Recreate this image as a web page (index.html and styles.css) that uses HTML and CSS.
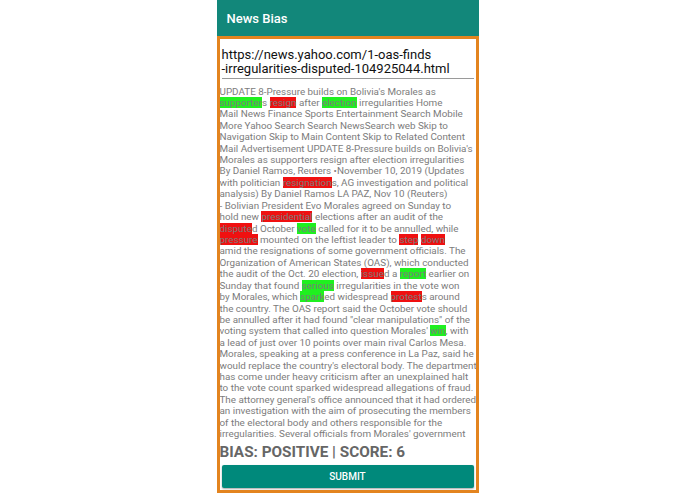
FILE: index.html
```html
<!DOCTYPE html>
<html>
<head>
<meta charset="utf-8">
<link rel="stylesheet" href="styles.css">
</head>
<body>
<div class="app">
  <header class="bar">News Bias</header>
  <main class="panel">
    <div class="url">
      <div>https://news.yahoo.com/1-oas-finds</div>
      <div>-irregularities-disputed-104925044.html</div>
    </div>
    <div class="article">
      <div class="ln">UPDATE 8-Pressure builds on Bolivia's Morales as</div>
      <div class="ln"><span class="g">supporter</span>s <span class="r">resign</span> after <span class="g">election</span> irregularities Home</div>
      <div class="ln">Mail News Finance Sports Entertainment Search Mobile</div>
      <div class="ln">More Yahoo Search Search NewsSearch web Skip to</div>
      <div class="ln">Navigation Skip to Main Content Skip to Related Content</div>
      <div class="ln">Mail Advertisement UPDATE 8-Pressure builds on Bolivia's</div>
      <div class="ln">Morales as supporters resign after election irregularities</div>
      <div class="ln">By Daniel Ramos, Reuters •November 10, 2019 (Updates</div>
      <div class="ln">with politician <span class="r">resignation</span>s, AG investigation and political</div>
      <div class="ln">analysis) By Daniel Ramos LA PAZ, Nov 10 (Reuters)</div>
      <div class="ln">- Bolivian President Evo Morales agreed on Sunday to</div>
      <div class="ln">hold new <span class="r">presidential</span> elections after an audit of the</div>
      <div class="ln"><span class="r">dispute</span>d October <span class="g">vote</span> called for it to be annulled, while</div>
      <div class="ln"><span class="r">pressure</span> mounted on the leftist leader to <span class="r">step</span> <span class="r">down</span></div>
      <div class="ln">amid the resignations of some government officials. The</div>
      <div class="ln">Organization of American States (OAS), which conducted</div>
      <div class="ln">the audit of the Oct. 20 election, <span class="r">issue</span>d a <span class="g">report</span> earlier on</div>
      <div class="ln">Sunday that found <span class="g">serious</span> irregularities in the vote won</div>
      <div class="ln">by Morales, which <span class="g">spark</span>ed widespread <span class="r">protest</span>s around</div>
      <div class="ln">the country. The OAS report said the October vote should</div>
      <div class="ln">be annulled after it had found "clear manipulations" of the</div>
      <div class="ln">voting system that called into question Morales' <span class="g">win</span>, with</div>
      <div class="ln">a lead of just over 10 points over main rival Carlos Mesa.</div>
      <div class="ln">Morales, speaking at a press conference in La Paz, said he</div>
      <div class="ln">would replace the country's electoral body. The department</div>
      <div class="ln">has come under heavy criticism after an unexplained halt</div>
      <div class="ln">to the vote count sparked widespread allegations of fraud.</div>
      <div class="ln">The attorney general's office announced that it had ordered</div>
      <div class="ln">an investigation with the aim of prosecuting the members</div>
      <div class="ln">of the electoral body and others responsible for the</div>
      <div class="ln">irregularities. Several officials from Morales' government</div>
    </div>
    <div class="bias">BIAS: POSITIVE | SCORE: 6</div>
    <button class="submit">SUBMIT</button>
  </main>
</div>
</body>
</html>
```

FILE: styles.css
```css
html, body {
  margin: 0;
  padding: 0;
  background: #ffffff;
}
body {
  font-family: Roboto, "Liberation Sans", sans-serif;
}
.app {
  width: 262px;
  height: 494px;
  margin: 0 auto;
  display: flex;
  flex-direction: column;
}
.bar {
  height: 36px;
  flex: none;
  background: #12877a;
  color: #ffffff;
  font-size: 13px;
  font-weight: 500;
  display: flex;
  align-items: center;
  padding-left: 10px;
  box-sizing: border-box;
}
.panel {
  height: 457px;
  flex: none;
  box-sizing: border-box;
  border: 3px solid #e3841f;
  display: flex;
  flex-direction: column;
  background: #ffffff;
  overflow: hidden;
}
.url {
  margin: 0 2px;
  padding: 8.5px 0 2.5px;
  font-size: 13px;
  line-height: 14px;
  color: #111111;
  border-bottom: 1px solid #9a9a9a;
  white-space: nowrap;
}
.article {
  margin-top: 6.5px;
  font-size: 9.85px;
  line-height: 11.43px;
  color: #7c7c7c;
}
.ln {
  white-space: pre;
  height: 11.43px;
}
.g {
  background: #1ff01f;
}
.r {
  background: #f01010;
}
.bias {
  margin-top: 2px;
  font-size: 15.3px;
  font-weight: 700;
  color: #666666;
  line-height: 20px;
}
.submit {
  margin: 3px 2px 0;
  height: 23px;
  flex: none;
  border: none;
  border-radius: 2px;
  background: #00897b;
  color: #ffffff;
  font-family: Roboto, "Liberation Sans", sans-serif;
  font-size: 10px;
  font-weight: 500;
  box-shadow: 0 1px 2px rgba(0, 0, 0, 0.35);
  padding: 0;
}
```
